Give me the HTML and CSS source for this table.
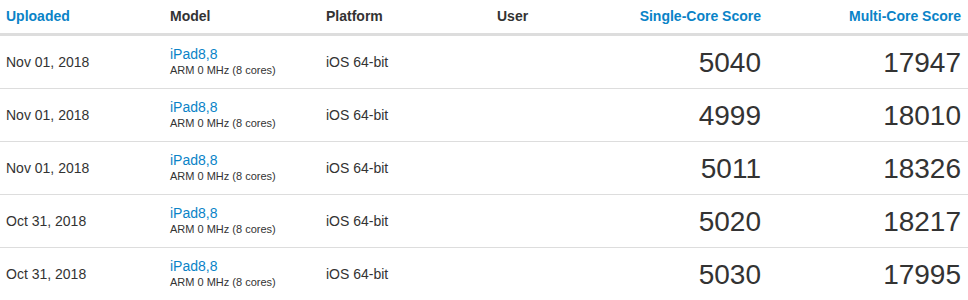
FILE: index.html
```html
<!DOCTYPE html>
<html>
<head>
<meta charset="utf-8">
<link rel="stylesheet" href="styles.css">
</head>
<body>
<table class="results">
  <colgroup>
    <col class="c-up"><col class="c-model"><col class="c-plat"><col class="c-user"><col class="c-single"><col class="c-multi">
  </colgroup>
  <thead>
    <tr>
      <th class="sort">Uploaded</th>
      <th>Model</th>
      <th>Platform</th>
      <th>User</th>
      <th class="sort num">Single-Core Score</th>
      <th class="sort num">Multi-Core Score</th>
    </tr>
  </thead>
  <tbody>
    <tr>
      <td>Nov 01, 2018</td>
      <td><a class="model" href="#">iPad8,8</a><div class="sub">ARM 0 MHz (8 cores)</div></td>
      <td>iOS 64-bit</td>
      <td></td>
      <td class="score">5040</td>
      <td class="score">17947</td>
    </tr>
    <tr>
      <td>Nov 01, 2018</td>
      <td><a class="model" href="#">iPad8,8</a><div class="sub">ARM 0 MHz (8 cores)</div></td>
      <td>iOS 64-bit</td>
      <td></td>
      <td class="score">4999</td>
      <td class="score">18010</td>
    </tr>
    <tr>
      <td>Nov 01, 2018</td>
      <td><a class="model" href="#">iPad8,8</a><div class="sub">ARM 0 MHz (8 cores)</div></td>
      <td>iOS 64-bit</td>
      <td></td>
      <td class="score">5011</td>
      <td class="score">18326</td>
    </tr>
    <tr>
      <td>Oct 31, 2018</td>
      <td><a class="model" href="#">iPad8,8</a><div class="sub">ARM 0 MHz (8 cores)</div></td>
      <td>iOS 64-bit</td>
      <td></td>
      <td class="score">5020</td>
      <td class="score">18217</td>
    </tr>
    <tr>
      <td>Oct 31, 2018</td>
      <td><a class="model" href="#">iPad8,8</a><div class="sub">ARM 0 MHz (8 cores)</div></td>
      <td>iOS 64-bit</td>
      <td></td>
      <td class="score">5030</td>
      <td class="score">17995</td>
    </tr>
  </tbody>
</table>
</body>
</html>
```
FILE: styles.css
```css
html, body {
  margin: 0;
  padding: 0;
  background: #fff;
}
body {
  font-family: "Liberation Sans", Arial, sans-serif;
  color: #333;
  font-size: 14px;
}
.results {
  width: 968px;
  border-collapse: collapse;
  table-layout: fixed;
}
.c-up { width: 164px; }
.c-model { width: 156px; }
.c-plat { width: 171px; }
.c-user { width: 137px; }
.c-single { width: 140px; }
.c-multi { width: 200px; }
.results th {
  height: 32px;
  padding: 0 7px 1px 6px;
  text-align: left;
  font-weight: bold;
  font-size: 14px;
  line-height: 17px;
  color: #333;
  border-bottom: 3px solid #ddd;
  vertical-align: middle;
  white-space: nowrap;
}
.results th.sort { color: #0a83c7; }
.results th.num, .results td.score { text-align: right; }
.results td {
  height: 50px;
  padding: 0 7px 0 6px;
  vertical-align: middle;
  border-bottom: 1px solid #ddd;
  line-height: 17px;
}
.results tbody tr:last-child td { border-bottom: none; }
.model {
  color: #0a83c7;
  text-decoration: none;
  font-size: 14px;
  display: block;
  line-height: 17px;
}
.sub {
  font-size: 11px;
  line-height: 15px;
}
.results td.score {
  font-size: 28px;
  line-height: 32px;
  padding-top: 2px;
}
```
